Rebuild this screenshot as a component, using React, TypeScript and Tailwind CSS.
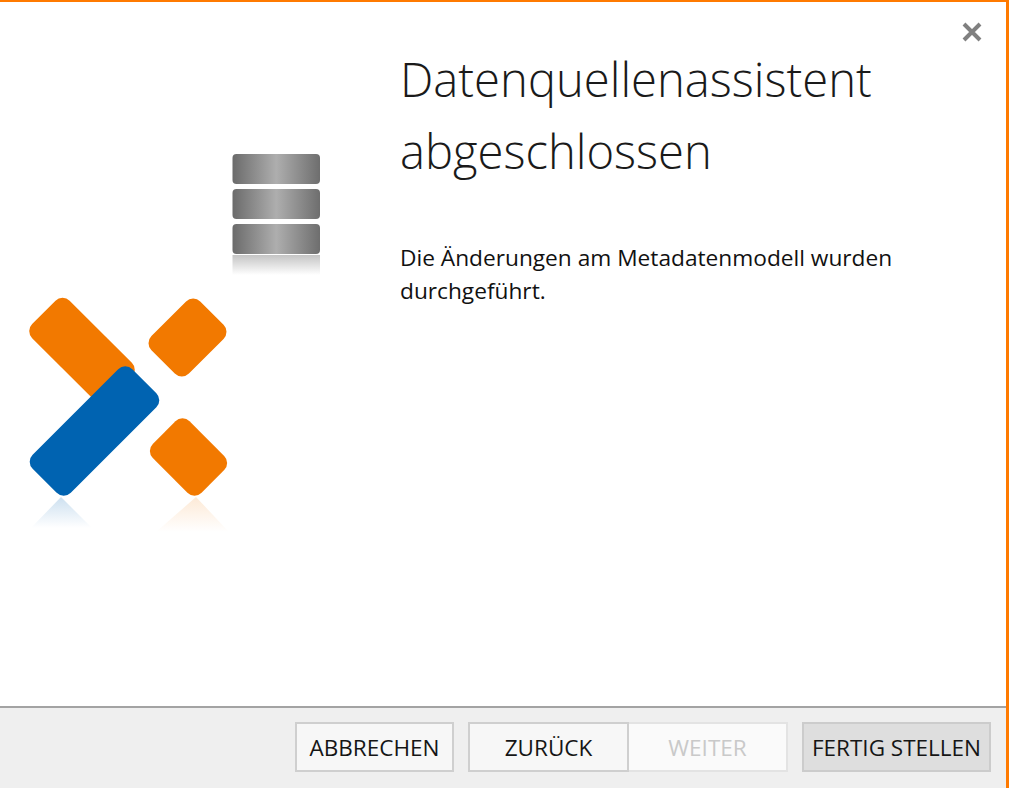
const SideArt = () => {
  return (
    <svg width="400" height="540" viewBox="0 0 400 540" className="block">
      <defs>
        <linearGradient id="drum" x1="0" y1="0" x2="1" y2="0">
          <stop offset="0" stopColor="#6b6b6b" />
          <stop offset="0.5" stopColor="#aeaeae" />
          <stop offset="1" stopColor="#6e6e6e" />
        </linearGradient>
        <linearGradient id="drumFade" x1="0" y1="0" x2="0" y2="1">
          <stop offset="0" stopColor="#c4c4c4" />
          <stop offset="1" stopColor="#ffffff" />
        </linearGradient>
        <linearGradient id="blueFade" x1="0" y1="0" x2="0" y2="1">
          <stop offset="0" stopColor="#0063b1" stopOpacity="0.2" />
          <stop offset="1" stopColor="#0063b1" stopOpacity="0" />
        </linearGradient>
        <linearGradient id="orangeFade" x1="0" y1="0" x2="0" y2="1">
          <stop offset="0" stopColor="#f27900" stopOpacity="0.16" />
          <stop offset="1" stopColor="#f27900" stopOpacity="0" />
        </linearGradient>
      </defs>

      <rect x="232.5" y="154" width="87.5" height="30" rx="4" fill="url(#drum)" />
      <rect x="232.5" y="189" width="87.5" height="30" rx="4" fill="url(#drum)" />
      <rect x="232.5" y="224" width="87.5" height="30" rx="4" fill="url(#drum)" />
      <rect x="232.5" y="255" width="87.5" height="20" fill="url(#drumFade)" />

      <rect x="28" y="324" width="108" height="53" rx="10" fill="#f27900" transform="rotate(45 82 350.5)" />
      <rect x="153" y="311" width="69" height="53" rx="10" fill="#f27900" transform="rotate(-45 187.5 337.5)" />
      <rect x="154" y="431" width="69" height="52" rx="10" fill="#f27900" transform="rotate(45 188.5 457)" />
      <rect x="24" y="404" width="141" height="54" rx="10" fill="#0063b1" transform="rotate(-45 94.5 431)" />

      <path d="M61 497 L92 528 L31 528 Z" fill="url(#blueFade)" />
      <path d="M196 497 L229 532 L156 532 Z" fill="url(#orangeFade)" />
    </svg>
  )
}

const App = () => {
  return (
    <div className="w-[1010px] h-[788px] bg-white overflow-hidden" style={{ fontFamily: '"Open Sans", "Liberation Sans", sans-serif' }}>
      <div className="w-[1009px] h-[788px] flex flex-col border-t-2 border-r-[3px] border-[#ff7a00]">
        <div className="h-[704px] flex relative">
          <div className="w-[400px] shrink-0 -mt-[2px]">
            <SideArt />
          </div>
          <div className="pt-[41px]">
            <div className="text-[47.2px] leading-[72px] font-light text-[#1a1a1a]">
              Datenquellenassistent<br />abgeschlossen
            </div>
            <div className="mt-[54px] text-[22.7px] leading-[33px] text-[#111]">
              Die Änderungen am Metadatenmodell wurden<br />durchgeführt.
            </div>
          </div>
          <svg width="20" height="20" viewBox="0 0 20 20" className="absolute top-[20px] right-[24px] text-[#808080]">
            <path d="M2 2 L18 18 M18 2 L2 18" stroke="currentColor" strokeWidth="4" />
          </svg>
        </div>
        <div className="flex-1 bg-[#efefef] border-t-2 border-[#a3a3a3] pt-[14px] pl-[295px] flex items-start text-[22.5px] text-[#151515]">
          <button className="w-[159px] h-[50px] pt-px bg-[#f7f7f7] border-2 border-[#cfcfcf]">ABBRECHEN</button>
          <div className="flex ml-[14px]">
            <button className="w-[161px] h-[50px] pt-px bg-[#f7f7f7] border-2 border-[#cfcfcf]">ZURÜCK</button>
            <button className="w-[159px] h-[50px] pt-px bg-[#fafafa] border-2 border-l-0 border-[#e3e3e3] text-[#c9c9c9]">WEITER</button>
          </div>
          <button className="w-[189px] h-[50px] pt-px ml-[14px] bg-[#dedede] border-2 border-[#cccccc]">FERTIG STELLEN</button>
        </div>
      </div>
    </div>
  )
}

export default App
